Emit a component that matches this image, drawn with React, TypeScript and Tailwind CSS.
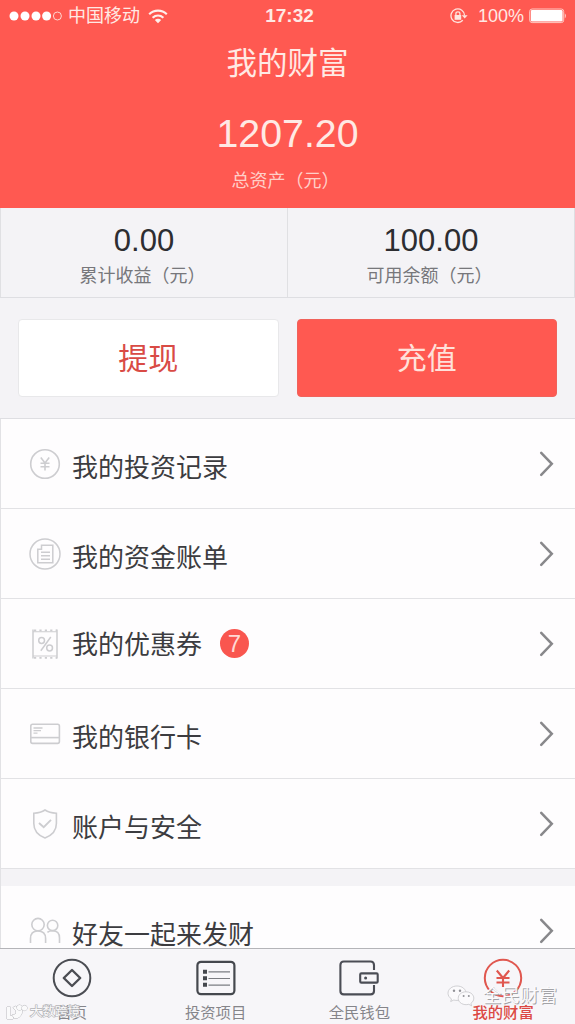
import type { ReactNode } from 'react';

interface MenuRowProps {
  icon: ReactNode;
  label: string;
  badge?: number;
}

const ChevronIcon = () => (
  <svg width="16" height="28" viewBox="0 0 16 28" fill="none" stroke="#88888b" strokeWidth="2.5" strokeLinecap="round">
    <path d="M2.2 2.8 L12.8 13.8 L2.2 24.8" />
  </svg>
);

const RecordIcon = () => (
  <svg width="32" height="32" viewBox="0 0 32 32" fill="none" stroke="#cdcdd0" strokeWidth="1.6">
    <circle cx="16" cy="16" r="14.3" />
    <path d="M11.8 9.5 L16 15 L20.2 9.5 M16 15 V22.5 M11.5 15.2 H20.5 M11.5 18.8 H20.5" />
  </svg>
);

const BillIcon = () => (
  <svg width="32" height="32" viewBox="0 0 32 32" fill="none" stroke="#cdcdd0" strokeWidth="1.5">
    <circle cx="16" cy="16" r="15" />
    <path d="M12.5 7.3 H23.8 V24.8 H8.8 V11.2 H12.5 Z" />
    <path d="M12 14.3 H21 M12 17.8 H21 M12 21.3 H21" />
  </svg>
);

const CouponIcon = () => (
  <svg width="32" height="32" viewBox="0 0 32 32" fill="none" stroke="#cdcdd0" strokeWidth="1.5">
    <path d="M4 1.5 V30.5 M28 1.5 V30.5" />
    <path d="M4 3.8 H28 M4 28 H28" strokeWidth="1.1" />
    <path d="M5 2.4 H28 M5 29.8 H28" strokeWidth="1.8" strokeDasharray="2.2 3.2" />
    <path d="M21.8 9 L11.8 22.8" />
    <circle cx="12.6" cy="12.5" r="2.9" />
    <circle cx="20.6" cy="20" r="2.9" />
  </svg>
);

const CardIcon = () => (
  <svg width="32" height="32" viewBox="0 0 32 32" fill="none" stroke="#cdcdd0" strokeWidth="1.6">
    <rect x="1.8" y="6.2" width="28.6" height="19.2" rx="1.8" />
    <path d="M2 19.6 H30" />
    <path d="M4.5 10 H13.5 M4.5 12.7 H12 M4.5 15.2 H8.5" strokeWidth="1.3" />
  </svg>
);

const ShieldIcon = () => (
  <svg width="32" height="32" viewBox="0 0 32 32" fill="none" stroke="#cdcdd0" strokeWidth="1.6">
    <path d="M16 2 C12.8 4.2 9 5 4.8 5.2 V15.5 C4.8 22.5 9.5 27.5 16 30 C22.5 27.5 27.4 22.5 27.4 15.5 V5.2 C23 5 19.2 4.2 16 2 Z" />
    <path d="M10 15 L14.7 19.2 L22 11.8" strokeWidth="1.9" />
  </svg>
);

const FriendsIcon = () => (
  <svg width="32" height="32" viewBox="0 0 32 32" fill="none" stroke="#cdcdd0" strokeWidth="1.6">
    <circle cx="9" cy="9.6" r="6.2" />
    <circle cx="23.6" cy="10.4" r="5.2" />
    <path d="M1.5 28 V23.5 C1.5 18.5 4.5 16 8.8 16 C13.5 16 16.6 18.5 16.6 23.5 V28" />
    <path d="M18.4 17.4 C19.8 16.2 21.6 15.8 23.6 15.8 C28 15.8 30.5 18.6 30.5 23 V28" />
  </svg>
);

const HomeTabIcon = () => (
  <svg width="40" height="40" viewBox="0 0 40 40" fill="none" stroke="#4b4d53" strokeWidth="2">
    <circle cx="20" cy="20" r="18.3" />
    <path d="M20 12 L28.2 20 L20 28 L11.8 20 Z" strokeWidth="2.4" strokeLinejoin="round" />
  </svg>
);

const ProjectTabIcon = () => (
  <svg width="40" height="40" viewBox="0 0 40 40" fill="none" stroke="#45484e">
    <rect x="1.4" y="3.8" width="37" height="32.4" rx="3.6" strokeWidth="2.2" />
    <path d="M12.5 13.9 H34 M12.5 20.5 H34 M12.5 27.1 H34" strokeWidth="1.1" stroke="#7b7d82" />
    <path d="M7 13.7 H11 M7 20.2 H11 M7 26.8 H11" strokeWidth="4" />
  </svg>
);

const WalletTabIcon = () => (
  <svg width="40" height="40" viewBox="0 0 40 40" fill="none" stroke="#4b4d55" strokeWidth="2.1">
    <path d="M35 12 V7 Q35 3.5 31.5 3.5 H4.8 Q1.4 3.5 1.4 7 V33 Q1.4 36.4 4.8 36.4 H31.5 Q35 36.4 35 33 V27" />
    <rect x="21.2" y="15.4" width="17.5" height="9.2" rx="1.2" />
    <circle cx="26.6" cy="20" r="1.5" fill="#4b4d55" stroke="none" />
  </svg>
);

const WealthTabIcon = () => (
  <svg width="40" height="40" viewBox="0 0 40 40" fill="none" stroke="#e0574f" strokeWidth="2">
    <circle cx="20" cy="20" r="18.2" />
    <path d="M13.8 12.5 L20 20 L26.2 12.5 M20 20 V29 M13.5 20 H26.5 M13.5 24.5 H26.5" strokeWidth="2.1" />
  </svg>
);

const WifiIcon = () => (
  <svg width="20" height="15" viewBox="0 0 20 15" fill="none" stroke="#fff0ec" strokeWidth="2.2">
    <path d="M1.2 5.2 C6.2 0.4 13.8 0.4 18.8 5.2" />
    <path d="M4.6 8.7 C7.8 5.8 12.2 5.8 15.4 8.7" />
    <path d="M10 14.2 L6.8 11 C8.6 9.4 11.4 9.4 13.2 11 Z" fill="#fff0ec" stroke="none" />
  </svg>
);

const RotationLockIcon = () => (
  <svg width="18" height="16" viewBox="0 0 18 16" fill="none" stroke="#ffe3dd" strokeWidth="1.3">
    <path d="M12.8 12.3 A6.8 6.8 0 1 1 14.6 7.5" />
    <path d="M11.8 7.2 H17.6 L14.7 10.6 Z" fill="#ffe3dd" stroke="none" />
    <rect x="4.6" y="7" width="6.6" height="4.8" fill="#ffe3dd" stroke="none" />
    <path d="M5.9 7.2 V5.6 Q5.9 3.8 7.9 3.8 Q9.9 3.8 9.9 5.6 V7.2" />
  </svg>
);

const BatteryIcon = () => (
  <svg width="38" height="16" viewBox="0 0 38 16" fill="none">
    <rect x="0.7" y="1" width="34" height="13.6" rx="2.4" stroke="#ffc9c2" strokeWidth="1" />
    <rect x="1.8" y="2" width="31.8" height="11.6" rx="1.4" fill="#fff" />
    <path d="M35.8 5.2 Q37.8 7.8 35.8 10.4 Z" fill="#ffe3dd" />
  </svg>
);

function StatusBar() {
  return (
    <div className="grid h-8 grid-cols-[1fr_auto_1fr] items-center pl-[9px] pr-2 text-[18px] leading-8 text-[#ffe9e4]">
      <div className="flex items-center">
        <svg width="54" height="10" viewBox="0 0 54 10" fill="#fff">
          <circle cx="5" cy="5" r="4.5" />
          <circle cx="16" cy="5" r="4.5" />
          <circle cx="27" cy="5" r="4.5" />
          <circle cx="37.6" cy="5" r="4.5" />
          <circle cx="48.4" cy="5" r="4" fill="none" stroke="#ffd5cf" strokeWidth="1" />
        </svg>
        <span className="ml-[5px]">中国移动</span>
        <span className="ml-2"><WifiIcon /></span>
      </div>
      <span className="pl-[3px] text-[19px] font-bold">17:32</span>
      <div className="flex items-center justify-end">
        <RotationLockIcon />
        <span className="ml-[10px] mr-[5px]">100%</span>
        <BatteryIcon />
      </div>
    </div>
  );
}

function Stat({ value, label }: { value: string; label: string }) {
  return (
    <div className="flex flex-1 flex-col items-center border-l border-[#e0e0e3] pt-[15px]">
      <span className="text-[31px] leading-9 text-[#2d2d31]">{value}</span>
      <span className="mt-[5px] pr-[3px] text-[18px] leading-6 text-[#77777b]">{label}</span>
    </div>
  );
}

function MenuRow({ icon, label, badge }: MenuRowProps) {
  return (
    <div className="flex h-[90px] shrink-0 items-center border-b border-[#e2e2e5] bg-[#fefdfe] pl-7 pr-5">
      {icon}
      <span className={badge === undefined ? 'ml-[11px] pt-2 text-[26px] leading-9 text-[#3c3c40]' : 'ml-[11px] pt-[3px] text-[26px] leading-9 text-[#3c3c40]'}>
        {label}
      </span>
      {badge !== undefined && (
        <span className="ml-[18px] flex size-[29px] items-center justify-center rounded-full bg-[#f9564f] text-[24px] leading-none text-[#ffd9d3]">
          {badge}
        </span>
      )}
      <span className="ml-auto"><ChevronIcon /></span>
    </div>
  );
}

function Tab({ icon, label, active = false }: { icon: ReactNode; label: string; active?: boolean }) {
  return (
    <div className="flex flex-1 flex-col items-center pt-[9px]">
      <span className="size-10 shrink-0">{icon}</span>
      <span className={active ? 'mt-[5px] text-[15.3px] leading-5 font-medium text-[#dc4a45]' : 'mt-[5px] text-[15.3px] leading-5 text-[#85858a]'}>
        {label}
      </span>
    </div>
  );
}

export default function App() {
  return (
    <div className="relative flex h-[1024px] w-[575px] flex-col overflow-hidden bg-[#f4f3f6] font-['Liberation_Sans','Noto_Sans_CJK_SC',sans-serif]">
      <header className="flex h-[208px] shrink-0 flex-col bg-[#ff5951]">
        <StatusBar />
        <div className="flex flex-col items-center text-[#ffe9e4]">
          <h1 className="mt-[9px] text-[30.5px] leading-[44px]">我的财富</h1>
          <div className="mt-[25px] text-[39.3px] leading-[46px]">1207.20</div>
          <div className="mt-[13px] pr-1 text-[18px] leading-6 text-[#ffcfc8]">总资产（元）</div>
        </div>
      </header>

      <section className="flex h-[90px] shrink-0 border-b border-r border-[#dedee2]">
        <Stat value="0.00" label="累计收益（元）" />
        <Stat value="100.00" label="可用余额（元）" />
      </section>

      <section className="flex h-[121px] shrink-0 gap-[18px] border-b border-[#dedee2] px-[18px] pt-[21px]">
        <button className="h-[78px] flex-1 rounded border border-[#e8e8ea] bg-white text-[30px] text-[#d94b45]">提现</button>
        <button className="h-[78px] flex-1 rounded border border-[#f0625b] bg-[#ff5951] text-[30px] text-[#ffe1da]">充值</button>
      </section>

      <main className="flex h-[529px] shrink-0 flex-col overflow-hidden border-l border-[#e2e2e5]">
        <MenuRow icon={<RecordIcon />} label="我的投资记录" />
        <MenuRow icon={<BillIcon />} label="我的资金账单" />
        <MenuRow icon={<CouponIcon />} label="我的优惠券" badge={7} />
        <MenuRow icon={<CardIcon />} label="我的银行卡" />
        <MenuRow icon={<ShieldIcon />} label="账户与安全" />
        <div className="h-[17px] shrink-0 bg-[#f4f3f6]" />
        <MenuRow icon={<FriendsIcon />} label="好友一起来发财" />
      </main>

      <nav className="flex h-[76px] shrink-0 border-t border-[#b4b4b8] bg-[#f7f6f9]">
        <Tab icon={<HomeTabIcon />} label="首页" />
        <Tab icon={<ProjectTabIcon />} label="投资项目" />
        <Tab icon={<WalletTabIcon />} label="全民钱包" />
        <Tab icon={<WealthTabIcon />} label="我的财富" active />
      </nav>

      {/* watermarks */}
      <div className="absolute bottom-[2px] left-[6px] flex items-center gap-[2px] text-[12.5px] leading-5 text-[#fafafb] [paint-order:stroke_fill] [-webkit-text-stroke:1.4px_#b4b4b8]">
        <svg width="22" height="16" viewBox="0 0 22 16" fill="#fafafb" stroke="#b0b0b4" strokeWidth="0.9">
          <path d="M1 3 H4.5 V12 H7 V15 H1 Z" />
          <path d="M7 3.5 L10 2 L13 6 H16.5 Q15.8 14.5 8.5 14.5 L6 11 Q10.5 11 10 7 Z" />
          <circle cx="13.5" cy="3.6" r="2.6" />
          <circle cx="18.5" cy="4" r="2.6" />
        </svg>
        <span>大数跨境</span>
      </div>
      <div className="absolute right-[18px] bottom-[16px] flex items-center gap-[7px] text-[18.5px] leading-6 text-[#fbfafc] [text-shadow:1px_1px_0_#a3a3a7]">
        <svg width="29" height="22" viewBox="0 0 29 22" fill="#fbfafc" stroke="#c5c5c9" strokeWidth="0.8">
          <path d="M10 1 C4.8 1 1 4.3 1 8.2 C1 10.6 2.3 12.6 4.5 13.9 L3.7 16.5 L6.8 15 C12 16.6 19 13.5 19 8.2 C19 4.3 15.2 1 10 1 Z" />
          <path d="M19 6.8 C14.4 6.8 11.2 9.8 11.2 13.3 C11.2 17.7 16.5 20.8 21.8 19.3 L24.6 20.8 L23.9 18.4 C29.5 14.5 26.7 6.8 19 6.8 Z" />
          <g fill="#929297" stroke="none">
            <circle cx="7" cy="5.8" r="1.2" />
            <circle cx="13" cy="5.8" r="1.2" />
            <circle cx="16.6" cy="11" r="1" />
            <circle cx="21.8" cy="11" r="1" />
          </g>
        </svg>
        <span>全民财富</span>
      </div>
    </div>
  );
}
